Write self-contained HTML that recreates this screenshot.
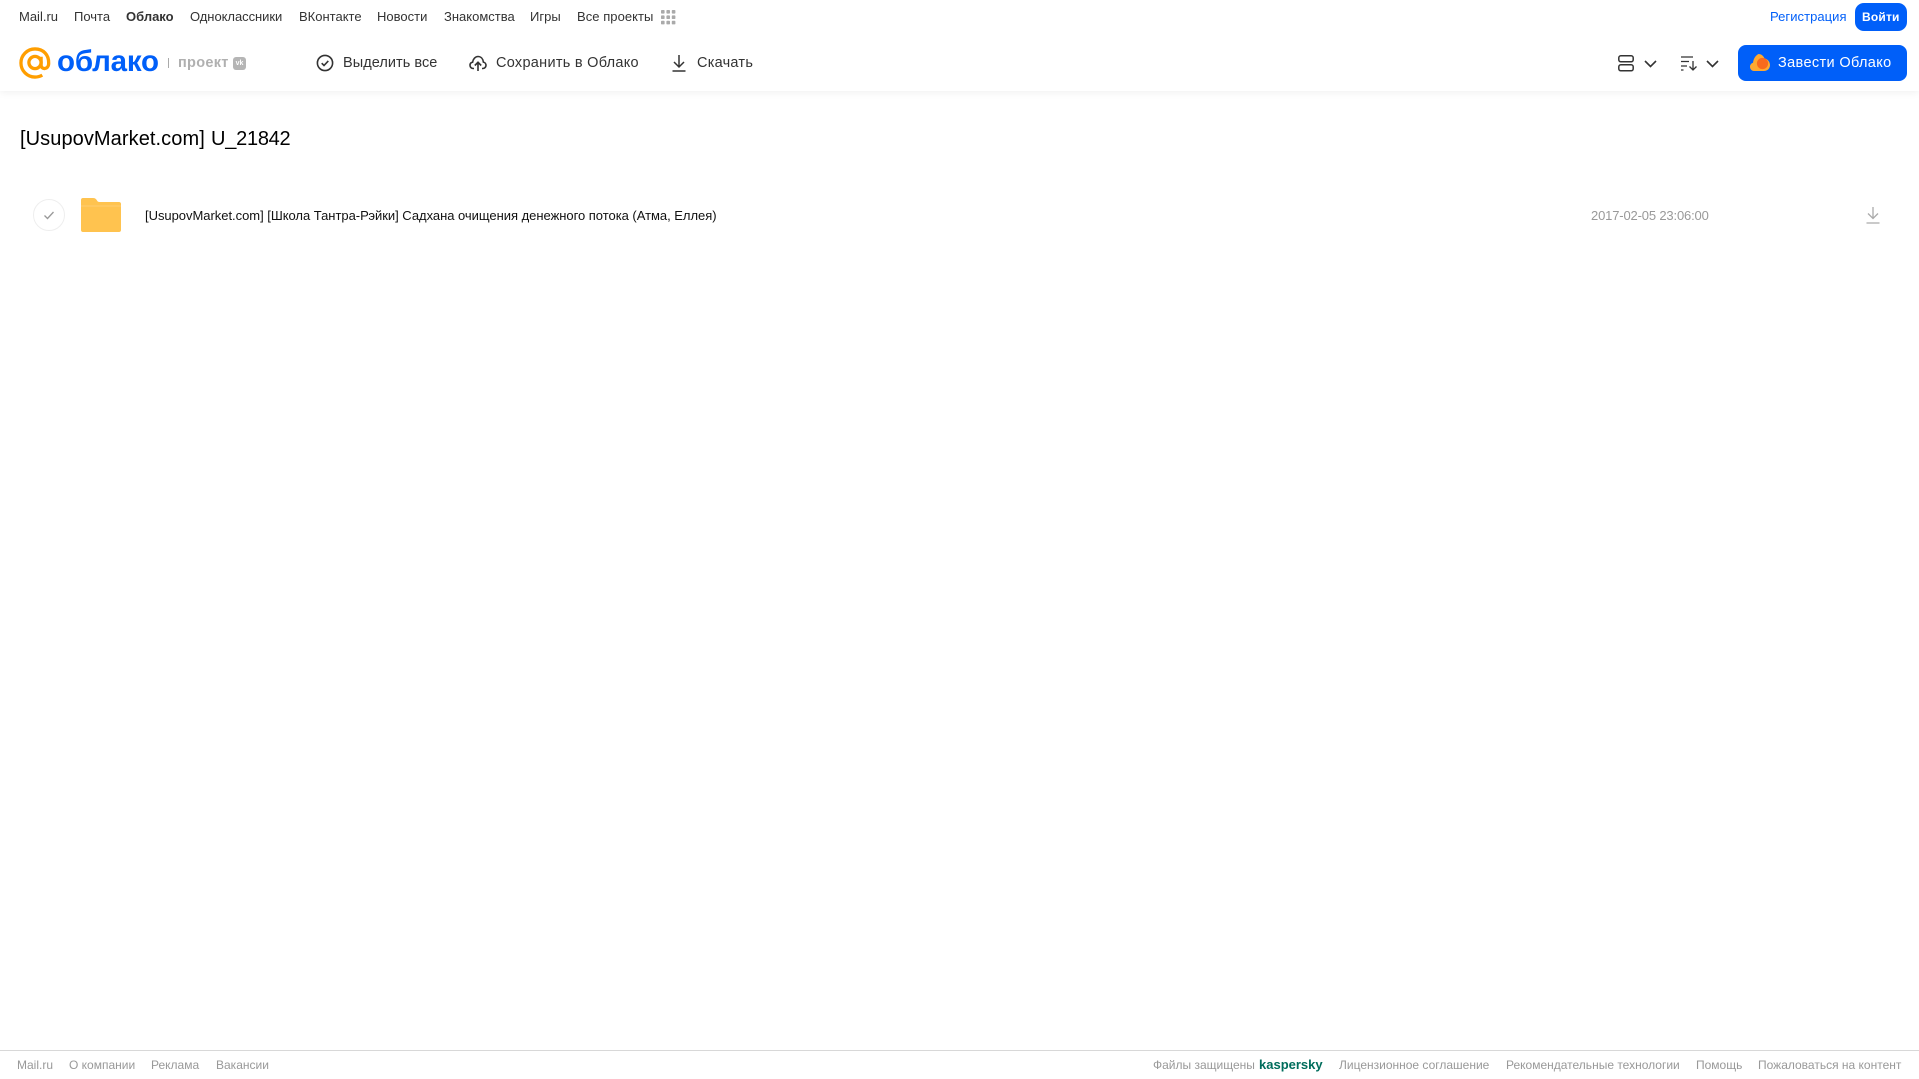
<!DOCTYPE html>
<html lang="ru"><head><meta charset="utf-8"><title>Облако</title>
<style>
html,body{margin:0;padding:0;background:#fff;width:1919px;height:1079px;overflow:hidden}
body{font-family:"Liberation Sans",Arial,sans-serif;position:relative}
.t{position:absolute;white-space:nowrap;line-height:16px}
.n{top:9px;font-size:13px;color:#333}
.a{top:54px;font-size:14.5px;color:#333;line-height:18px}
.f{top:1057px;font-size:12px;color:#999}
svg{position:absolute;overflow:visible}
#head{position:absolute;left:0;top:0;width:1919px;height:91px;background:#fff;box-shadow:0 1px 8px rgba(0,0,0,.07)}
</style></head><body>
<div id="head"></div>
<span class="t n" style="left:19px">Mail.ru</span>
<span class="t n" style="left:74px">Почта</span>
<span class="t n" style="left:126px;font-weight:bold">Облако</span>
<span class="t n" style="left:190px;letter-spacing:-.05px">Одноклассники</span>
<span class="t n" style="left:299px">ВКонтакте</span>
<span class="t n" style="left:377px">Новости</span>
<span class="t n" style="left:444px">Знакомства</span>
<span class="t n" style="left:530px">Игры</span>
<span class="t n" style="left:577px;letter-spacing:.05px">Все проекты</span>
<svg style="left:661px;top:10px" width="15" height="15" fill="#aaa"><rect x="0" y="0" width="3.6" height="3.6" rx=".8"/><rect x="5.4" y="0" width="3.6" height="3.6" rx=".8"/><rect x="10.8" y="0" width="3.6" height="3.6" rx=".8"/><rect x="0" y="5.4" width="3.6" height="3.6" rx=".8"/><rect x="5.4" y="5.4" width="3.6" height="3.6" rx=".8"/><rect x="10.8" y="5.4" width="3.6" height="3.6" rx=".8"/><rect x="0" y="10.8" width="3.6" height="3.6" rx=".8"/><rect x="5.4" y="10.8" width="3.6" height="3.6" rx=".8"/><rect x="10.8" y="10.8" width="3.6" height="3.6" rx=".8"/></svg>
<span class="t" style="left:1770px;top:9px;font-size:13px;color:#005ff9;letter-spacing:.05px">Регистрация</span>
<div style="position:absolute;left:1855px;top:3px;width:52px;height:28px;background:#005ff9;border-radius:9px"></div>
<span class="t" style="left:1862px;top:9px;font-size:12px;color:#fff;font-weight:bold;letter-spacing:.2px">Войти</span>

<svg style="left:19px;top:47px" width="32" height="32" viewBox="0 0 33 33" fill="none" stroke="#ff9e00" stroke-width="3.400"><circle cx="16.500" cy="16" r="6.300"/><path d="M22.800 10v8.500c0 5.200 7.600 5.200 7.800-1.500C31 8 25 2 16.500 2 8.500 2 2 8.500 2 16.500S8.500 31 16.500 31c3 0 5.300-.7 7.500-2"/></svg>
<span class="t" style="left:57px;top:43px;font-size:29.500px;line-height:38px;color:#005ff9;font-weight:bold;letter-spacing:-.2px">облако</span>
<div style="position:absolute;left:168px;top:58px;width:1px;height:10px;background:#aaa"></div>
<span class="t" style="left:178px;top:55px;font-size:14.500px;color:#b0b0b0;font-weight:bold;letter-spacing:.3px">проект</span>
<div style="position:absolute;left:233px;top:57px;width:13px;height:13px;background:#b5b5b5;border-radius:3px;color:#fff;font:bold 7px/13px 'Liberation Sans',sans-serif;text-align:center">vk</div>

<svg style="left:316px;top:54px" width="18" height="18" viewBox="0 0 18 18" fill="none" stroke="#333" stroke-width="1.600"><circle cx="9" cy="9" r="7.600"/><path d="M5.700 9.200l2.300 2.300 4.300-4.600"/></svg>
<span class="t a" style="left:343px;letter-spacing:.05px">Выделить все</span>
<svg style="left:469px;top:54px" width="18" height="18" viewBox="0 0 18 18" fill="none" stroke="#333" stroke-width="1.600"><path d="M5 14.500H4.200C2.300 14.500 1 13 1 11.300c0-1.500 1-2.800 2.600-3.100C4 5 6.300 2.500 9 2.500c2.900 0 5 2.200 5.400 5.600 1.500.3 2.600 1.600 2.600 3.200 0 1.800-1.400 3.200-3.200 3.200H13"/><path d="M9 17V8.500M5.800 11.500L9 8.300l3.200 3.200"/></svg>
<span class="t a" style="left:496px;letter-spacing:.28px">Сохранить в Облако</span>
<svg style="left:671px;top:54px" width="16" height="18" viewBox="0 0 16 18" fill="none" stroke="#333" stroke-width="1.500"><path d="M8 1v11.500M3 8l5 5 5-5M1.500 17h13"/></svg>
<span class="t a" style="left:697px;letter-spacing:.25px">Скачать</span>

<svg style="left:1618px;top:55px" width="16" height="17" viewBox="0 0 16 17" fill="none" stroke="#333" stroke-width="1.500"><rect x=".8" y=".8" width="14.400" height="6" rx="2"/><rect x=".8" y="9.800" width="14.400" height="6" rx="2"/></svg>
<svg style="left:1644px;top:60px" width="13" height="8" viewBox="0 0 13 8" fill="none" stroke="#333" stroke-width="1.600"><path d="M1 1l5.500 5.500L12 1"/></svg>
<svg style="left:1681px;top:56px" width="17" height="15" viewBox="0 0 17 15" fill="none" stroke="#333" stroke-width="1.300"><path d="M0 1h12M0 5.500h8M0 10h6M0 14h2.500M12 5v9M8.500 10.500L12 14l3.500-3.500"/></svg>
<svg style="left:1706px;top:60px" width="13" height="8" viewBox="0 0 13 8" fill="none" stroke="#333" stroke-width="1.600"><path d="M1 1l5.500 5.500L12 1"/></svg>

<div style="position:absolute;left:1738px;top:45px;width:169px;height:36px;background:#005ff9;border-radius:8px"></div>
<svg style="left:1750px;top:54px" width="20" height="17" viewBox="0 0 20 17"><path d="M4 17C1.500 17 0 15 0 12.800 0 10.800 1.300 9.300 3 8.800 3.500 5 5 2 8.500 0 11.500 0 13.500 2 14.500 4.500 17.500 5 20 7.800 20 11c0 3.500-2.500 6-6 6z" fill="#ffa930"/><circle cx="12.500" cy="9.500" r="5.600" fill="#f96a1d"/></svg>
<span class="t a" style="left:1778px;color:#fff;letter-spacing:.36px">Завести Облако</span>

<span class="t" style="left:20px;top:127px;font-size:20px;line-height:24px;color:#000;letter-spacing:.08px">[UsupovMarket.com]</span>
<span class="t" style="left:211px;top:127px;font-size:20px;line-height:24px;color:#000;letter-spacing:-.25px">U_21842</span>

<svg style="left:33px;top:199px" width="32" height="32" viewBox="0 0 32 32" fill="none"><circle cx="16" cy="16" r="15.500" stroke="#eee"/><path d="M11.500 16.500l3 3 6-6.500" stroke="#999" stroke-width="1.300"/></svg>
<svg style="left:81px;top:198px" width="40" height="34" viewBox="0 0 40 34"><path d="M2 0h10c2 0 3 .8 4 2.500.5 1 1.200 1.500 2.500 1.500H38c1.200 0 2 .8 2 2v26c0 1.200-.8 2-2 2H2c-1.200 0-2-.8-2-2V2C0 .8.800 0 2 0z" fill="#ffc34f"/><path d="M0 8h40" stroke="#ffd27c" stroke-width=".8"/></svg>
<span class="t" style="left:145px;top:208px;font-size:13px;color:#111;letter-spacing:-.03px">[UsupovMarket.com] [Школа Тантра-Рэйки] Садхана очищения денежного потока (Атма, Еллея)</span>
<span class="t" style="left:1591px;top:208px;font-size:13px;color:#999;letter-spacing:-.16px">2017-02-05 23:06:00</span>
<svg style="left:1866px;top:207px" width="14" height="17" viewBox="0 0 14 17" fill="none" stroke="#aaa" stroke-width="1.300"><path d="M7 0v11M2 6.500l5 5 5-5M.5 16h13"/></svg>

<div style="position:absolute;left:0;top:1050px;width:1919px;height:1px;background:#d8d8d8"></div>
<span class="t f" style="left:17px">Mail.ru</span>
<span class="t f" style="left:69px">О компании</span>
<span class="t f" style="left:151px">Реклама</span>
<span class="t f" style="left:216px">Вакансии</span>
<span class="t f" style="left:1153px">Файлы защищены</span>
<span class="t f" style="left:1259px;color:#006d5c;font-weight:bold;font-size:13px">kaspersky</span>
<span class="t f" style="left:1339px">Лицензионное соглашение</span>
<span class="t f" style="left:1506px">Рекомендательные технологии</span>
<span class="t f" style="left:1696px">Помощь</span>
<span class="t f" style="left:1758px">Пожаловаться на контент</span>
</body></html>
